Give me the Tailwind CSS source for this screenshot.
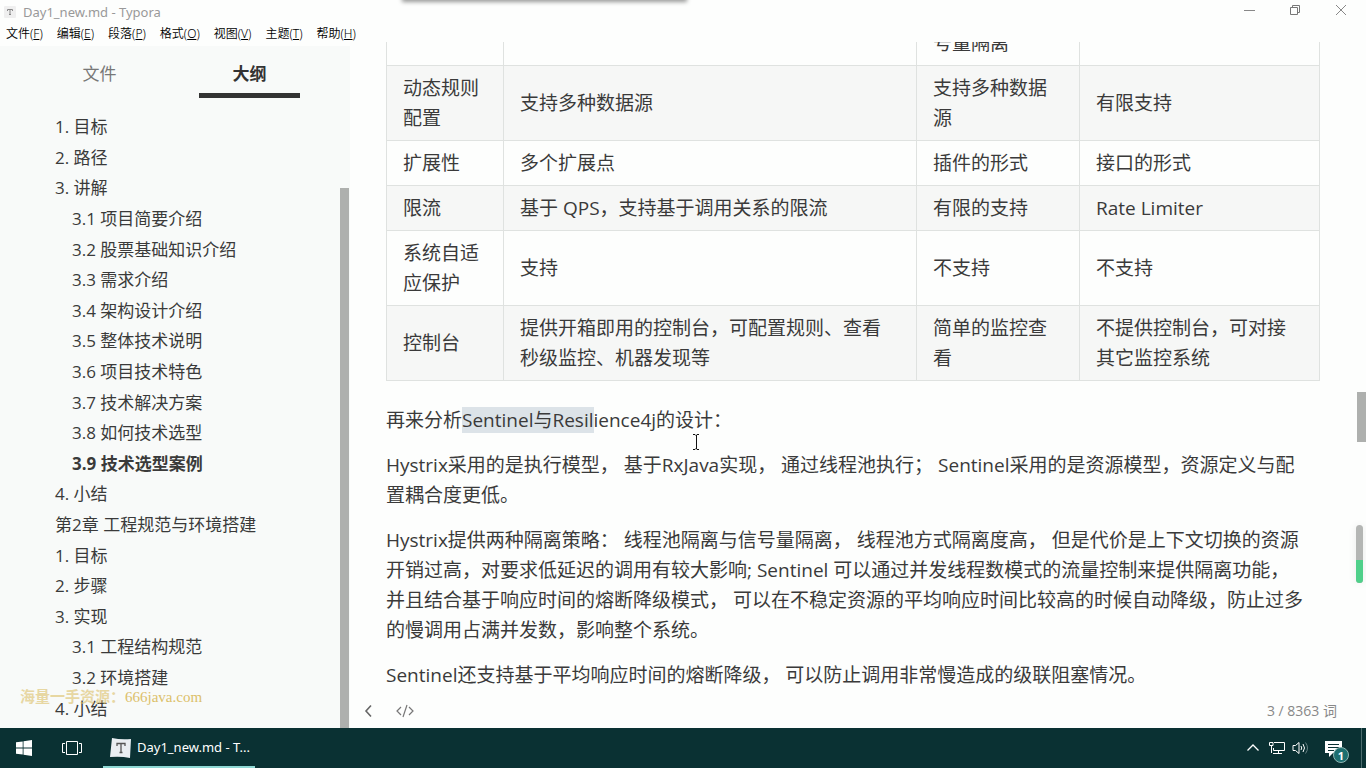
<!DOCTYPE html>
<html lang="zh-CN">
<head>
<meta charset="utf-8">
<title>Day1_new.md - Typora</title>
<script src="https://cdn.jsdelivr.net/npm/@tailwindcss/browser@4"></script>
</head>
<body class="relative flex h-screen flex-col overflow-hidden bg-[#fdfefd] font-['Open_Sans','Noto_Sans_CJK_SC',sans-serif] text-[#3a3a3a]">

<!-- Window above the top edge casts a shadow -->
<div class="absolute left-[403px] -top-2 h-2 w-[283px] shadow-[0_1px_4px_1px_rgba(0,0,0,0.4)]"></div>

<header class="flex h-6 shrink-0 items-center pr-0.5 pl-1 text-[#999]">
  <svg class="h-4 w-4" viewBox="0 0 16 16" aria-hidden="true"><rect x="0" y="2" width="12" height="12" rx="1" fill="#efefef"/><path d="M3.500 7V5.500h5V7M6 5.500v5M5 10.500h2" fill="none" stroke="#888"/></svg>
  <h1 class="ml-[3px] flex-1 font-['Noto_Sans','Noto_Sans_CJK_SC',sans-serif] text-[13px] leading-6">Day1_new.md - Typora</h1>
  <div class="mb-1 flex">
    <button aria-label="最小化" class="flex h-5 w-[46px] items-center justify-center"><svg class="h-3 w-3" viewBox="0 0 12 12" fill="none" stroke="#888"><path d="M1 6.500h11"/></svg></button>
    <button aria-label="还原" class="flex h-5 w-[46px] items-center justify-center"><svg class="h-3 w-3" viewBox="0 0 12 12" fill="none" stroke="#777"><path d="M1.500 3.500h7v7h-7zM3.500 3.500v-2h7v7h-2"/></svg></button>
    <button aria-label="关闭" class="flex h-5 w-[46px] items-center justify-center"><svg class="h-3 w-3" viewBox="0 0 12 12" fill="none" stroke="#888"><path d="M1 1l10 10M11 1L1 11"/></svg></button>
  </div>
</header>

<nav class="flex h-[18px] shrink-0 items-center gap-[14px] pt-0.5 pl-1.5 font-['Noto_Sans','Noto_Sans_CJK_SC',sans-serif] text-xs leading-4 font-[350] text-black">
  <button>文件(<u>F</u>)</button>
  <button>编辑(<u>E</u>)</button>
  <button>段落(<u>P</u>)</button>
  <button>格式(<u>O</u>)</button>
  <button>视图(<u>V</u>)</button>
  <button>主题(<u>T</u>)</button>
  <button>帮助(<u>H</u>)</button>
</nav>

<div class="flex min-h-0 flex-1">
  <aside class="relative mt-1 w-[350px] shrink-0 overflow-hidden bg-[#f8faf9] text-[17px]">
    <div class="flex h-[52px] pt-[6px] pl-12">
      <button class="h-[46px] w-[103px] pb-[2px] text-[#777]">文件</button>
      <button class="ml-12 h-[46px] w-[101px] border-b-[5px] border-[#333] pt-0.5 font-bold text-[#333]">大纲</button>
    </div>
    <ul class="mt-[14px] grid h-[612px] auto-rows-fr items-center pl-[55px] leading-[30px] whitespace-nowrap">
      <li><a href="#">1. 目标</a></li>
      <li><a href="#">2. 路径</a></li>
      <li><a href="#">3. 讲解</a></li>
      <li class="pl-[17px]"><a href="#">3.1 项目简要介绍</a></li>
      <li class="pl-[17px]"><a href="#">3.2 股票基础知识介绍</a></li>
      <li class="pl-[17px]"><a href="#">3.3 需求介绍</a></li>
      <li class="pl-[17px]"><a href="#">3.4 架构设计介绍</a></li>
      <li class="pl-[17px]"><a href="#">3.5 整体技术说明</a></li>
      <li class="pl-[17px]"><a href="#">3.6 项目技术特色</a></li>
      <li class="pl-[17px]"><a href="#">3.7 技术解决方案</a></li>
      <li class="pl-[17px]"><a href="#">3.8 如何技术选型</a></li>
      <li class="pl-[17px] font-bold"><a href="#">3.9 技术选型案例</a></li>
      <li><a href="#">4. 小结</a></li>
      <li><a href="#">第2章 工程规范与环境搭建</a></li>
      <li><a href="#">1. 目标</a></li>
      <li><a href="#">2. 步骤</a></li>
      <li><a href="#">3. 实现</a></li>
      <li class="pl-[17px]"><a href="#">3.1 工程结构规范</a></li>
      <li class="pl-[17px]"><a href="#">3.2 环境搭建</a></li>
      <li><a href="#">4. 小结</a></li>
    </ul>
    <div class="absolute top-[142px] right-px bottom-0 w-[9px] bg-[#aeb0ae]"></div>
    <p class="absolute bottom-[22px] left-5 font-['Liberation_Serif','Noto_Sans_CJK_SC',serif] text-[15px] leading-[18px] whitespace-nowrap text-[#dcc06a]"><span class="font-bold opacity-60">海量一手资源：</span>666java.com</p>
  </aside>

  <main class="flex min-w-0 flex-1 flex-col">
    <article class="min-h-0 flex-1 overflow-hidden pr-[46px] pl-9 text-[19px] leading-[30px]">
      <table class="-mt-[52px] mb-6 w-full table-fixed border-collapse text-left [&_td]:border [&_td]:border-[#dfe2e0] [&_td]:px-4 [&_td]:py-[7px]">
        <colgroup><col class="w-[117px]"><col class="w-[413px]"><col class="w-[163px]"><col></colgroup>
        <tbody>
          <tr><td></td><td></td><td>线程池隔离/信<br>号量隔离</td><td></td></tr>
          <tr class="bg-[#f6f7f6]"><td>动态规则配置</td><td>支持多种数据源</td><td>支持多种数据源</td><td>有限支持</td></tr>
          <tr><td>扩展性</td><td>多个扩展点</td><td>插件的形式</td><td>接口的形式</td></tr>
          <tr class="bg-[#f6f7f6]"><td>限流</td><td>基于 QPS，支持基于调用关系的限流</td><td>有限的支持</td><td>Rate Limiter</td></tr>
          <tr><td>系统自适应保护</td><td>支持</td><td>不支持</td><td>不支持</td></tr>
          <tr class="bg-[#f6f7f6]"><td>控制台</td><td>提供开箱即用的控制台，可配置规则、查看<br>秒级监控、机器发现等</td><td>简单的监控查看</td><td>不提供控制台，可对接<br>其它监控系统</td></tr>
        </tbody>
      </table>
      <div class="flex flex-col gap-[15px] whitespace-nowrap">
        <p>再来分析<mark class="bg-[#dce3e8] text-inherit">Sentinel与Resil</mark>ience4j的设计：</p>
        <p>Hystrix采用的是执行模型， 基于RxJava实现， 通过线程池执行； Sentinel采用的是资源模型，资源定义与配<br>置耦合度更低。</p>
        <p>Hystrix提供两种隔离策略： 线程池隔离与信号量隔离， 线程池方式隔离度高， 但是代价是上下文切换的资源<br>开销过高，对要求低延迟的调用有较大影响; Sentinel 可以通过并发线程数模式的流量控制来提供隔离功能，<br>并且结合基于响应时间的熔断降级模式， 可以在不稳定资源的平均响应时间比较高的时候自动降级，防止过多<br>的慢调用占满并发数，影响整个系统。</p>
        <p>Sentinel还支持基于平均响应时间的熔断降级， 可以防止调用非常慢造成的级联阻塞情况。</p>
      </div>
    </article>
    <footer class="flex h-[34px] shrink-0 items-center pr-[29px] pl-[11px] text-sm text-[#888]">
      <button aria-label="隐藏侧边栏" class="w-4"><svg class="h-4 w-4" viewBox="0 0 16 16" fill="none" stroke="#666" stroke-width="1.600"><path d="M10 2.500L5 8l5 5.500"/></svg></button>
      <button aria-label="源代码模式" class="ml-[18px]"><svg class="h-4 w-5" viewBox="0 0 20 16" fill="none" stroke="#777" stroke-width="1.200"><path d="M6 4L2 8l4 4M14 4l4 4-4 4M12 2L8 14"/></svg></button>
      <button class="ml-auto">3 / 8363 词</button>
    </footer>
  </main>
</div>

<!-- Document scrollbar and recorder level indicator -->
<div class="absolute top-[392px] right-0 h-[50px] w-[9px] bg-[#aeb0ae]"></div>
<div class="absolute top-[525px] right-[3px] flex h-[58px] w-[7px] flex-col overflow-hidden rounded-full bg-[#b4b6b4] shadow-[0_0_8px_rgba(0,0,0,0.08)]"><div class="mt-auto h-[23px] bg-[#4fd08a]"></div></div>
<!-- Text pointer -->
<svg class="absolute top-[434px] left-[692px] h-4 w-2" viewBox="0 0 8 16" fill="none" stroke="#111" aria-hidden="true"><path d="M1 .5h2l1 1 1-1h2M4.500 1v14M1 15.500h2l1-1 1 1h2"/></svg>

<div class="flex h-10 shrink-0 items-center bg-[#0a3133] font-['Noto_Sans','Noto_Sans_CJK_SC',sans-serif] text-white">
  <button aria-label="开始" class="flex h-10 w-12 items-center justify-center"><svg class="h-4 w-4" viewBox="0 0 16 16" fill="#fff"><path d="M0 2.300l6.700-.9v6.200H0zM7.500 1.300L16 0v7.600H7.500zM0 8.400h6.700v6.200L0 13.700zM7.500 8.400H16V16l-8.500-1.200z"/></svg></button>
  <button aria-label="任务视图" class="flex h-10 w-12 items-center justify-center"><svg class="h-4 w-5" viewBox="0 0 20 16" fill="none" stroke="#fff"><path d="M4.500 1.500h11v13h-11zM3 3.500H.5v9H3M17 3.500h2.500v9H17"/></svg></button>
  <button class="ml-[7px] flex h-10 w-[152px] items-center border-b-2 border-[#8fd8d4] pl-[7px] text-[13px]">
    <svg class="mt-[2px] h-[22px] w-[22px]" viewBox="0 0 22 22" aria-hidden="true"><path d="M2 1q9 2 19 1l-1 19q-9-2-20-1z" fill="#e9eef2"/><path d="M7 9V6.500h8V9M11 6.500v9M9.500 15.500h3" fill="none" stroke="#555" stroke-width="1.300"/></svg>
    <span class="mt-[2px] ml-[5px]">Day1_new.md - T...</span>
  </button>
  <div class="ml-auto flex h-10 items-center">
    <button aria-label="显示隐藏的图标" class="w-4"><svg class="h-4 w-4" viewBox="0 0 16 16" fill="none" stroke="#fff" stroke-width="1.300"><path d="M2.500 10.500L8 5l5.500 5.500"/></svg></button>
    <button aria-label="网络" class="ml-2 w-4"><svg class="h-4 w-4" viewBox="0 0 16 16" fill="none" stroke="#fff"><path d="M5 2.500h10.500v8H4.500V8M.5 2.500H4v3H.5zM2.500 5.500V13M9.500 10.500v3M4 13.500h9"/></svg></button>
    <button aria-label="音量" class="ml-[7px] w-[18px]"><svg class="h-4 w-[18px]" viewBox="0 0 18 16" fill="none" stroke="#fff"><path d="M1 5.500h2.500L7 2.500v11l-3.500-3H1zM9 6q1.500 2 0 4M11 4q3 4 0 8"/><path d="M13.500 2.500q4 5.500 0 11" stroke="#668083"/></svg></button>
    <button aria-label="操作中心，1 条新通知" class="relative ml-[15px] h-10 w-[26px]">
      <svg class="mt-px h-[18px] w-[18px]" viewBox="0 0 18 18" aria-hidden="true"><path d="M0 1h17v12H8l-4 4v-4H0z" fill="#fff"/><path d="M3 4.500h11M3 7.500h11M3 10.500h6" stroke="#0a3133"/></svg>
      <span class="absolute top-[19px] left-[8px] flex h-4 w-4 items-center justify-center rounded-full border border-[#8fb5b2] bg-[#1d6f70] text-[11px] leading-none font-bold">1</span>
    </button>
    <div class="ml-[10px] h-10 w-[5px] border-l border-[#4d6d6e]"></div>
  </div>
</div>
</body>
</html>
